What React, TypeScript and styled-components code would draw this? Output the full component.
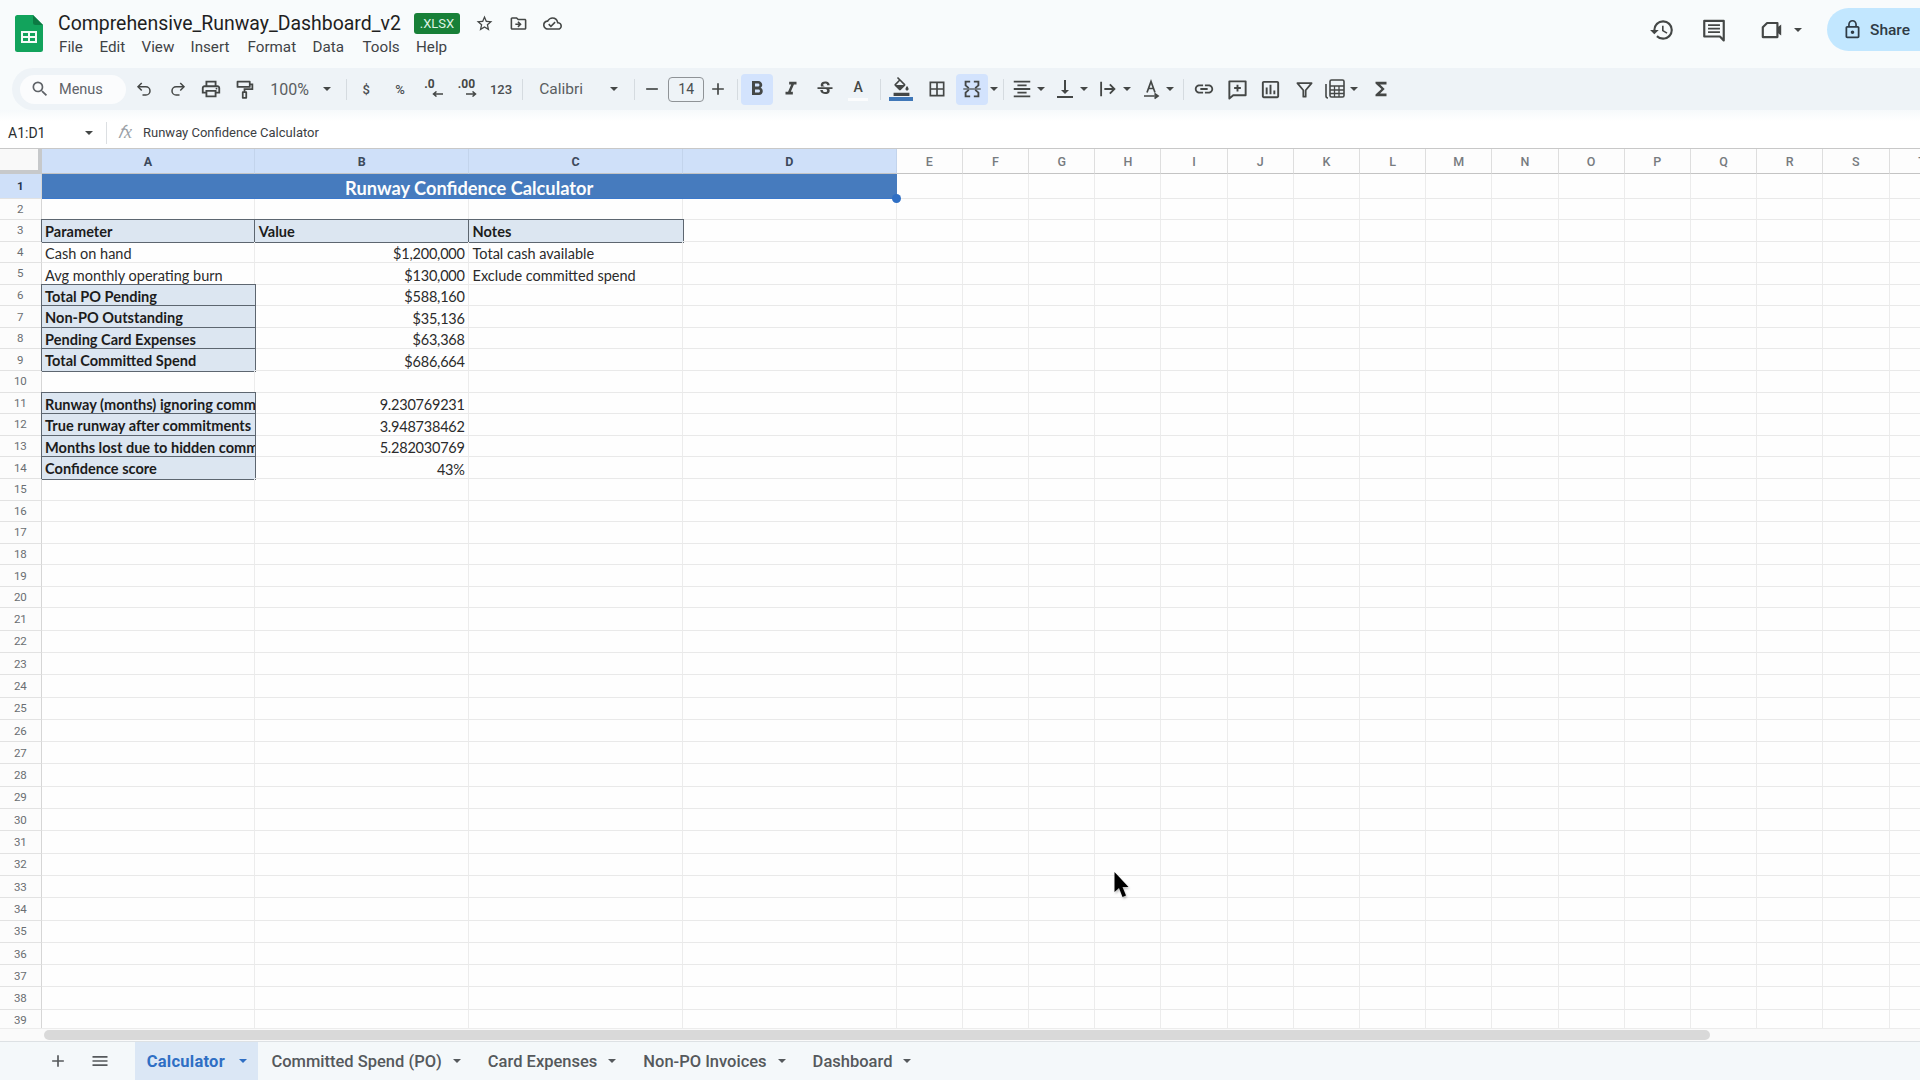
import React from "react";
import styled, { createGlobalStyle } from "styled-components";
import {
  MdAdd, MdBorderAll, MdFormatAlignCenter, MdFormatBold, MdFormatColorFill, MdFormatItalic, MdFunctions, MdInsertLink,
  MdLockOutline, MdMenu, MdOutlineCloudDone, MdOutlineDriveFileMove, MdOutlineHistory,
  MdOutlineInsertChart, MdOutlineStarBorder, MdOutlinePrint, MdRemove, MdSearch,
  MdStrikethroughS, MdVerticalAlignBottom,
} from "react-icons/md";

const Global = createGlobalStyle`
  html, body { margin: 0; padding: 0; background: #f9fbfd; }
  #root { width: 1920px; height: 1080px; }
  * { box-sizing: border-box; }
`;

const Page = styled.div`
  position: relative; width: 1920px; height: 1080px; overflow: hidden; display: flex; flex-direction: column;
  background: #f8fbfc; font-family: Roboto, "Noto Sans", sans-serif; color: #3c4043;
`;

/* ---------- header ---------- */
const Header = styled.header`
  height: 68px; flex: none; display: flex; align-items: flex-start; padding-left: 15px;
`;
const Logo = styled.svg`
  width: 28px; height: 37px; margin-top: 15px; flex: none;
`;
const TitleColumn = styled.div`
  margin-left: 15px; display: flex; flex-direction: column;
`;
const TitleRow = styled.div`
  display: flex; align-items: center; height: 24px; margin-top: 11px;
`;
const Title = styled.span`
  font-size: 19.45px; color: #1f1f1f; width: 356px; white-space: nowrap;
`;
const Badge = styled.span`
  width: 46px; height: 21px; border-radius: 3px; background: #188038; color: #dff3e5; font-size: 13px;
  display: flex; align-items: center; justify-content: center;
`;
const TitleIcon = styled.span<{ $ml: number }>`
  display: flex; margin-left: ${(p) => p.$ml}px; color: #444746; font-size: 19px;
`;
const MenuRow = styled.nav`
  display: flex; margin-top: -0.4px; padding-left: 1px; height: 24px; align-items: center;
`;
const MenuItem = styled.span<{ $w: number }>`
  width: ${(p) => p.$w}px; font-size: 15.2px; color: #3f4346;
`;
const Actions = styled.div`
  margin-left: auto; display: flex; align-items: center; height: 43px; margin-top: 8px; margin-right: -27px;
`;
const ActionIcon = styled.span<{ $ml: number }>`
  display: flex; margin-left: ${(p) => p.$ml}px; color: #444746; font-size: 26px;
`;
const SharePill = styled.div`
  margin-left: 25.5px; width: 120px; height: 43px; border-radius: 22px 0 0 22px; background: #c2e7ff;
  display: flex; align-items: center; padding-left: 15px; gap: 7px; font-size: 15.5px; font-weight: 500; color: #2f3b45;
`;

/* ---------- toolbar ---------- */
const Toolbar = styled.div`
  height: 42px; flex: none; margin-left: 12px; padding-left: 8px; display: flex; align-items: center;
  background: #eef3f7; border-radius: 21px 0 0 21px; color: #444746;
`;
const SearchPill = styled.div`
  width: 106px; height: 29px; border-radius: 15px; background: #fbfcfd; display: flex; align-items: center;
  padding-left: 10px; gap: 9px; font-size: 14.5px; color: #5f6368; flex: none;
`;
const Tool = styled.div<{ $w?: number; $ml?: number; $active?: boolean }>`
  position: relative; flex: none; width: ${(p) => p.$w ?? 33.4}px; height: 31px; margin-left: ${(p) => p.$ml ?? 0}px;
  display: flex; align-items: center; justify-content: center; border-radius: 4px; font-size: 20px; color: #444746;
  background: ${(p) => (p.$active ? "#d3e3fd" : "transparent")};
`;
const ToolText = styled.span`
  font-size: 13px; font-weight: 500; color: #4a4e51;
`;
const DecimalStack = styled.span`
  display: flex; flex-direction: column; align-items: flex-start; width: 19px; font-size: 12px; font-weight: 700; line-height: 11px; margin-top: -3px;
`;
const DecimalArrow = styled.svg<{ $ml: number }>`
  display: block; margin: 1px 0 0 ${(p) => p.$ml}px;
`;
const Separator = styled.span<{ $ml: number }>`
  flex: none; width: 1px; height: 21px; margin-left: ${(p) => p.$ml}px; background: #d5dbe0;
`;
const Select = styled.div<{ $w: number; $pl: number; $size: number }>`
  flex: none; width: ${(p) => p.$w}px; padding-left: ${(p) => p.$pl}px; display: flex; align-items: center; justify-content: space-between;
  font-size: ${(p) => p.$size}px; color: #5a5e61;
`;
const CaretSlot = styled.span`
  flex: none; width: 18px; display: flex; justify-content: center;
`;
const Caret = styled.span<{ $size?: number; $color?: string; $ml?: number }>`
  flex: none; display: block; width: 0; height: 0; margin-left: ${(p) => p.$ml ?? 0}px;
  border-left: ${(p) => p.$size ?? 5}px solid transparent; border-right: ${(p) => p.$size ?? 5}px solid transparent;
  border-top: ${(p) => p.$size ?? 5}px solid ${(p) => p.$color ?? "#444746"};
`;
const SizeBox = styled.div`
  flex: none; width: 36px; height: 25px; margin-left: 4.6px; border: 1px solid #8f9397; border-radius: 4px;
  display: flex; align-items: center; justify-content: center; font-size: 14px; color: #4a4e51;
`;
const TextColorA = styled.span`
  display: flex; flex-direction: column; align-items: center; font-size: 14px; font-weight: 500; line-height: 16px; margin-top: 2px;
  &::after { content: ""; width: 20px; height: 3px; background: #fbfcfd; margin-top: 3px; }
`;
const FillStack = styled.span`
  display: flex; flex-direction: column; align-items: center; font-size: 19px;
  &::after { content: ""; width: 24px; height: 4px; background: #3f77b8; margin-top: 1px; }
`;
const SplitTool = styled.div<{ $ml: number; $w?: number }>`
  flex: none; display: flex; align-items: center; gap: 1px; margin-left: ${(p) => p.$ml}px; font-size: 20px; color: #444746;
  width: ${(p) => p.$w ?? 37}px;
`;
const IconBox = styled.span`
  flex: none; width: 24px; display: flex; justify-content: center;
`;

/* ---------- formula bar ---------- */
const FormulaBar = styled.div`
  height: 39px; flex: none; display: flex; align-items: center; padding: 7px 0 0 8px; font-size: 13px;
  background: linear-gradient(#f6f9fb, #fff 30%); border-bottom: 1px solid #c8c8c8; color: #3c4043;
`;
const NameBox = styled.div`
  width: 85px; display: flex; align-items: center; justify-content: space-between; font-size: 14px; color: #2a2d2f;
`;
const Fx = styled.span`
  margin-left: 11px; width: 25px; font-family: "Liberation Serif", serif; font-style: italic; font-size: 18px; color: #9aa0a6;
`;
const FormulaSep = styled.span`
  width: 1px; height: 22px; background: #dcdfe2; margin-left: 13px;
`;

/* ---------- sheet ---------- */
const Sheet = styled.main`
  flex: 1; min-height: 0; display: flex; flex-direction: column; background: #fefefe;
`;
const Viewport = styled.div`
  flex: 1; min-height: 0; overflow: hidden;
`;
const Grid = styled.div`
  display: grid;
  grid-template-columns: 41.7px repeat(4, 213.75px) repeat(16, 66.2px);
  grid-template-rows: 25px 25px 21px repeat(18, 21.58px) repeat(19, 22.3px);
  font-family: Lato, "Open Sans", sans-serif;
`;
const Corner = styled.div`
  background: #f9f9f9; border-right: 4px solid #c7c9cb; border-bottom: 4px solid #c7c9cb;
`;
const ColHead = styled.div<{ $on: boolean }>`
  display: flex; align-items: center; justify-content: center; font-family: Roboto, sans-serif; font-size: 12.5px;
  font-weight: ${(p) => (p.$on ? 700 : 500)}; color: ${(p) => (p.$on ? "#3c4a5c" : "#777b7f")};
  background: ${(p) => (p.$on ? "#cfe0f9" : "#fdfdfd")};
  border-right: 1px solid ${(p) => (p.$on ? "#c3d4ec" : "#dedede")}; border-bottom: 1px solid #c4c4c4;
`;
const RowHead = styled.div<{ $on: boolean }>`
  display: flex; align-items: center; justify-content: center; font-family: Roboto, sans-serif; font-size: 11.5px;
  font-weight: ${(p) => (p.$on ? 700 : 400)}; color: ${(p) => (p.$on ? "#1f3650" : "#6a6e72")};
  background: ${(p) => (p.$on ? "#cfe0f9" : "#fcfcfc")}; border-right: 1px solid #d6d6d6; border-bottom: 1px solid #e2e2e2;
`;
const Cell = styled.div`
  display: flex; align-items: flex-end; padding: 0 3.5px 0 3.4px; font-size: 14.5px; line-height: 17px; color: #2b2b2b;
  white-space: nowrap; overflow: hidden; border-right: 1px solid #ececec; border-bottom: 1.4px solid #e9e9e9;
`;
const ValueCell = styled(Cell)`
  justify-content: flex-end; letter-spacing: -0.23px;
`;
const BoxCell = styled(Cell)`
  background: #dce6f1; font-weight: 700; font-size: 14.55px; line-height: 18.6px; color: #1c1c1c; border: none; box-shadow: 0 0 0 1px #5d6670;
`;
const TitleCell = styled.div`
  position: relative; grid-column: span 4; display: flex; align-items: center; justify-content: center; padding-top: 3px;
  background: #467bbe; color: #fdfdfd; font-weight: 700; font-size: 18.25px; border-bottom: 1px solid #3a78cc;
`;
const Handle = styled.span`
  position: absolute; right: -4px; bottom: -4.5px; width: 9px; height: 9px; border-radius: 50%; background: #2f6fc4;
`;
const ScrollTrack = styled.div`
  flex: none; height: 13px; padding: 1px 0 2px 44px; background: #fafafa; border-top: 1px solid #ececec;
`;
const Thumb = styled.div`
  width: 1666px; height: 10px; border-radius: 5px; background: #d9d9d9;
`;

/* ---------- tabs ---------- */
const TabBar = styled.footer`
  height: 39px; flex: none; display: flex; align-items: stretch; gap: 1.5px; background: #f4f8fa; border-top: 1px solid #dde1e4;
`;
const TabIcon = styled.span<{ $ml: number }>`
  width: 24px; margin-left: ${(p) => p.$ml}px; display: flex; align-items: center; justify-content: center; font-size: 20px; color: #55595c;
`;
const Tab = styled.div<{ $ml?: number }>`
  display: flex; align-items: center; gap: 11px; padding: 0 13.5px 0 12px; margin-left: ${(p) => p.$ml ?? 0}px; font-size: 16.5px;
  font-weight: 500; color: #55595c;
`;
const ActiveTab = styled(Tab)`
  gap: 14.5px; padding-right: 10.5px; font-weight: 700; letter-spacing: 0.25px; color: #2f6fc4; background: #dbe7f5;
`;
const MouseCursor = styled.svg`
  position: absolute; left: 1113px; top: 871px; width: 16px; height: 28px; filter: drop-shadow(1px 2px 1px rgba(0,0,0,.25));
`;

const colLetters = "ABCDEFGHIJKLMNOPQRST".split("");
type Row = { a?: string; b?: string; c?: string; box?: boolean; head?: boolean };
const rows: Record<number, Row> = {
  3: { a: "Parameter", b: "Value", c: "Notes", head: true },
  4: { a: "Cash on hand", b: "$1,200,000", c: "Total cash available" },
  5: { a: "Avg monthly operating burn", b: "$130,000", c: "Exclude committed spend" },
  6: { a: "Total PO Pending", b: "$588,160", box: true },
  7: { a: "Non-PO Outstanding", b: "$35,136", box: true },
  8: { a: "Pending Card Expenses", b: "$63,368", box: true },
  9: { a: "Total Committed Spend", b: "$686,664", box: true },
  11: { a: "Runway (months) ignoring commitments", b: "9.230769231", box: true },
  12: { a: "True runway after commitments", b: "3.948738462", box: true },
  13: { a: "Months lost due to hidden commitments", b: "5.282030769", box: true },
  14: { a: "Confidence score", b: "43%", box: true },
};

function SheetRow({ n }: { n: number }) {
  const r = rows[n] ?? {};
  const empties = Array.from({ length: 16 }, (_, i) => <Cell key={i} />);
  if (n === 1) {
    return (
      <>
        <RowHead $on>1</RowHead>
        <TitleCell>Runway Confidence Calculator<Handle /></TitleCell>
        {empties}
      </>
    );
  }
  const A = r.box || r.head ? BoxCell : Cell;
  return (
    <>
      <RowHead $on={false}>{n}</RowHead>
      <A>{r.a}</A>
      {r.head ? <BoxCell>{r.b}</BoxCell> : <ValueCell>{r.b}</ValueCell>}
      {r.head ? <BoxCell>{r.c}</BoxCell> : <Cell>{r.c}</Cell>}
      <Cell />
      {empties}
    </>
  );
}

const Ico = ({ children, w = 20 }: { children: React.ReactNode; w?: number }) => (
  <svg width={w} height={w} viewBox="0 0 24 24" fill="none" stroke="currentColor" strokeWidth="2">{children}</svg>
);

export default function App() {
  return (
    <Page>
      <Global />
      <Header>
        <Logo viewBox="0 0 28 37">
          <path d="M2.5 0H18l10 10v24.5a2.5 2.5 0 0 1-2.5 2.5h-23A2.5 2.5 0 0 1 0 34.5v-32A2.5 2.5 0 0 1 2.5 0z" fill="#12a35c" />
          <path d="M18 0l10 10h-7.5A2.5 2.5 0 0 1 18 7.500z" fill="#0c7a43" />
          <path d="M6 16h16v12H6zM8 18v3h5v-3zM15 18v3h5v-3zM8 23v3h5v-3zM15 23v3h5v-3z" fill="#f4fbf7" fillRule="evenodd" />
        </Logo>
        <TitleColumn>
          <TitleRow>
            <Title>Comprehensive_Runway_Dashboard_v2</Title>
            <Badge>.XLSX</Badge>
            <TitleIcon $ml={15}><MdOutlineStarBorder /></TitleIcon>
            <TitleIcon $ml={15}><MdOutlineDriveFileMove /></TitleIcon>
            <TitleIcon $ml={15}><MdOutlineCloudDone /></TitleIcon>
          </TitleRow>
          <MenuRow>
            <MenuItem $w={40.5}>File</MenuItem>
            <MenuItem $w={42}>Edit</MenuItem>
            <MenuItem $w={49}>View</MenuItem>
            <MenuItem $w={57}>Insert</MenuItem>
            <MenuItem $w={65}>Format</MenuItem>
            <MenuItem $w={50}>Data</MenuItem>
            <MenuItem $w={53.5}>Tools</MenuItem>
            <MenuItem $w={40}>Help</MenuItem>
          </MenuRow>
        </TitleColumn>
        <Actions>
          <ActionIcon $ml={0}><MdOutlineHistory /></ActionIcon>
          <ActionIcon $ml={26}>
            <svg width="26" height="26" viewBox="0 0 24 24" fill="none" stroke="currentColor">
              <path d="M3 3.500h18v18.200l-3.500-3.700H3z" strokeWidth="2" strokeLinejoin="round" />
              <path d="M6.500 7.500h11M6.500 10.800h11M6.500 14h11" strokeWidth="1.600" />
            </svg>
          </ActionIcon>
          <ActionIcon $ml={32}>
            <svg width="26" height="26" viewBox="0 0 24 24">
              <path d="M7.500 5.500H17v13H3.500V9.500z" fill="none" stroke="currentColor" strokeWidth="2" strokeLinejoin="round" />
              <path d="M17 9.500l3.500-2.500v10L17 14.500z" fill="currentColor" />
            </svg>
          </ActionIcon>
          <Caret $size={4} $ml={9} />
          <SharePill><MdLockOutline size={21} />Share</SharePill>
        </Actions>
      </Header>

      <Toolbar>
        <SearchPill><MdSearch size={20} />Menus</SearchPill>
        <Tool $ml={1.5}>
          <Ico w={18}><path d="M9 14L4 9l5-5" /><path d="M4 9h10.500a5.500 5.500 0 0 1 0 11H10" /></Ico>
        </Tool>
        <Tool>
          <Ico w={18}><path d="M15 14l5-5-5-5" /><path d="M20 9H9.500a5.500 5.500 0 0 0 0 11H14" /></Ico>
        </Tool>
        <Tool><MdOutlinePrint size={22} /></Tool>
        <Tool>
          <Ico w={21}>
            <path d="M4 3h14v6H4z" strokeLinejoin="round" />
            <path d="M18 6h3v5.500h-9V15" />
            <path d="M10 15h4v6.500h-4z" strokeLinejoin="round" />
          </Ico>
        </Tool>
        <Select $w={75.3} $pl={9.3} $size={16}>100%<CaretSlot><Caret $size={4.500} /></CaretSlot></Select>
        <Separator $ml={9.5} />
        <Tool $w={33.7} $ml={2.6}><ToolText>$</ToolText></Tool>
        <Tool $w={33.7}><ToolText>%</ToolText></Tool>
        <Tool $w={33.7}>
          <DecimalStack>.0<DecimalArrow $ml={8} width="11" height="6" viewBox="0 0 11 6"><path d="M11 3H2M4.500.5L1.500 3l3 2.500" fill="none" stroke="currentColor" strokeWidth="1.5" /></DecimalArrow></DecimalStack>
        </Tool>
        <Tool $w={33.7}>
          <DecimalStack>.00<DecimalArrow $ml={8} width="11" height="6" viewBox="0 0 11 6"><path d="M0 3h9M6.500.5L9.500 3l-3 2.500" fill="none" stroke="currentColor" strokeWidth="1.5" /></DecimalArrow></DecimalStack>
        </Tool>
        <Tool $w={33.7}><ToolText>123</ToolText></Tool>
        <Separator $ml={4} />
        <Select $w={99.85} $pl={16.3} $size={15.5}>Calibri<CaretSlot><Caret $size={4.500} /></CaretSlot></Select>
        <Separator $ml={11} />
        <Tool $w={24} $ml={4.9}><MdRemove /></Tool>
        <SizeBox>14</SizeBox>
        <Tool $w={24} $ml={2}><MdAdd /></Tool>
        <Separator $ml={6.5} />
        <Tool $w={32} $ml={3.5} $active><MdFormatBold size={24} /></Tool>
        <Tool $w={33.6} $ml={1}><MdFormatItalic size={22} /></Tool>
        <Tool $w={33.6}><MdStrikethroughS size={20} /></Tool>
        <Tool $w={33.6}><TextColorA>A</TextColorA></Tool>
        <Separator $ml={4.7} />
        <Tool $w={33.6} $ml={3.7}><FillStack><MdFormatColorFill /></FillStack></Tool>
        <Tool $w={34} $ml={2.2}><MdBorderAll /></Tool>
        <Tool $w={32} $ml={2} $active>
          <Ico w={22}>
            <path d="M10 4H5v4l3.500 3M14 4h5v4l-3.500 3M10 20H5v-4l3.500-3M14 20h5v-4l-3.500-3" strokeWidth="2" />
            <path d="M2.500 12h19" strokeWidth="1.300" />
          </Ico>
        </Tool>
        <Tool $w={12}><Caret $size={4.500} /></Tool>
        <Separator $ml={3.200} />
        <SplitTool $ml={5.8}><IconBox><MdFormatAlignCenter size={22} /></IconBox><Caret $size={4.500} $ml={2} /></SplitTool>
        <SplitTool $ml={6}><IconBox><MdVerticalAlignBottom size={24} /></IconBox><Caret $size={4.500} $ml={2} /></SplitTool>
        <SplitTool $ml={6}>
          <IconBox>
            <Ico w={22}><path d="M4.500 4v16M8 12h11M14 7l5 5-5 5" strokeWidth="2" /></Ico>
          </IconBox>
          <Caret $size={4.500} $ml={2} />
        </SplitTool>
        <SplitTool $ml={6}>
          <IconBox>
            <Ico w={24}>
              <path d="M8 15.500l4-11 4 11M9.500 11.500h5" strokeWidth="1.700" />
              <path d="M5 19h13M15.500 16.500L19 19l-3.500 2.500" strokeWidth="1.700" />
            </Ico>
          </IconBox>
          <Caret $size={4.500} $ml={2} />
        </SplitTool>
        <Separator $ml={6.500} />
        <Tool $w={33.5} $ml={3.500}><MdInsertLink size={22} /></Tool>
        <Tool $w={33.5}>
          <Ico w={23}>
            <path d="M3.500 3.500h17v14.500H7.500l-4 3.500z" strokeLinejoin="round" />
            <path d="M12 7v7M8.500 10.500h7" />
          </Ico>
        </Tool>
        <Tool $w={33.5}><MdOutlineInsertChart size={23} /></Tool>
        <Tool $w={33.5}>
          <Ico w={19}><path d="M3 4h18l-7.500 9v8h-3v-8z" strokeWidth="2.200" strokeLinejoin="round" /></Ico>
        </Tool>
        <SplitTool $ml={2}>
          <IconBox>
            <Ico w={24}>
              <path d="M3 7v12a2 2 0 0 0 2 2" strokeWidth="1.600" />
              <rect x="7" y="3" width="14" height="17" rx="1.500" strokeWidth="1.600" />
              <path d="M7 9h14M7 13h14M7 16.500h14M11.500 9v11M16 9v11" strokeWidth="1.300" />
            </Ico>
          </IconBox>
          <Caret $size={4} $ml={2} />
        </SplitTool>
        <Tool $ml={4}><MdFunctions size={22} /></Tool>
      </Toolbar>

      <FormulaBar>
        <NameBox>A1:D1<Caret $size={4} /></NameBox>
        <FormulaSep />
        <Fx>𝑓x</Fx>
        <span>Runway Confidence Calculator</span>
      </FormulaBar>

      <Sheet>
        <Viewport>
          <Grid>
            <Corner />
            {colLetters.map((c, i) => <ColHead key={c} $on={i < 4}>{c}</ColHead>)}
            {Array.from({ length: 39 }, (_, i) => <SheetRow key={i} n={i + 1} />)}
          </Grid>
        </Viewport>
        <ScrollTrack><Thumb /></ScrollTrack>
      </Sheet>

      <TabBar>
        <TabIcon $ml={46}><MdAdd /></TabIcon>
        <TabIcon $ml={16.500}><MdMenu /></TabIcon>
        <ActiveTab $ml={21.200}>Calculator<Caret $size={4} $color="#2f6fc4" /></ActiveTab>
        <Tab>Committed Spend (PO)<Caret $size={4} $color="#55595c" /></Tab>
        <Tab>Card Expenses<Caret $size={4} $color="#55595c" /></Tab>
        <Tab>Non-PO Invoices<Caret $size={4} $color="#55595c" /></Tab>
        <Tab>Dashboard<Caret $size={4} $color="#55595c" /></Tab>
      </TabBar>

      <MouseCursor viewBox="0 0 16 28">
        <path d="M1.500 1v20l4.500-4 3.500 9 3.500-1.500-3.500-8.500h6z" fill="#000" />
      </MouseCursor>
    </Page>
  );
}
